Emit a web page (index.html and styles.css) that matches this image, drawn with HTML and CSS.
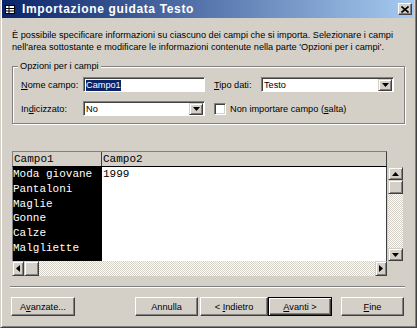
FILE: index.html
```html
<html>
<head>
<meta charset="UTF-8">
<link rel="stylesheet" href="styles.css">
</head>
<body>
<div class="window">
  <div class="titlebar">
    <svg class="app-icon" width="10" height="9" viewBox="0 0 10 9">
      <rect x="0.5" y="0.5" width="9" height="8" fill="#fff" stroke="#000"/>
      <path d="M1 3.5h8M1 6h8M4 1v7" stroke="#000" fill="none"/>
    </svg>
    <span class="title">Importazione guidata Testo</span>
    <span class="close">
      <svg width="8" height="7" viewBox="0 0 8 7"><path d="M0.5 0.5l7 6M7.5 0.5l-7 6" stroke="#000" stroke-width="1.6"/></svg>
    </span>
  </div>

  <div class="dialog">
    <p class="intro">È possibile specificare informazioni su ciascuno dei campi che si importa. Selezionare i campi<br>nell'area sottostante e modificare le informazioni contenute nella parte 'Opzioni per i campi'.</p>

    <fieldset class="group">
      <legend>Opzioni per i campi</legend>
      <div class="fields">
        <label class="lbl"><u>N</u>ome campo:</label>
        <div class="field"><span class="sel">Campo1</span></div>
        <span></span>
        <label class="lbl"><u>T</u>ipo dati:</label>
        <div class="field combo"><span class="val">Testo</span><span class="drop"><svg width="7" height="4" viewBox="0 0 7 4"><path d="M0 0h7L3.5 4z"/></svg></span></div>

        <label class="lbl">In<u>d</u>icizzato:</label>
        <div class="field combo"><span class="val">No</span><span class="drop"><svg width="7" height="4" viewBox="0 0 7 4"><path d="M0 0h7L3.5 4z"/></svg></span></div>
        <span></span>
        <div class="check-row"><span class="checkbox"></span><span>Non importare campo (<u>s</u>alta)</span></div>
      </div>
    </fieldset>

    <div class="sheet">
      <div class="sheet-head">
        <span class="hcol c1">Campo1</span>
        <span class="hcol c2">Campo2</span>
      </div>
      <div></div>
      <div class="sheet-body">
        <div class="dcol c1">
          <div>Moda giovane</div>
          <div>Pantaloni</div>
          <div>Maglie</div>
          <div>Gonne</div>
          <div>Calze</div>
          <div>Malgliette</div>
        </div>
        <div class="dcol c2">
          <div>1999</div>
        </div>
      </div>
      <div class="vscroll">
        <span class="sbtn vbtn"><svg width="7" height="4" viewBox="0 0 7 4"><path d="M0 4h7L3.5 0z"/></svg></span>
        <span class="thumb vthumb"></span>
        <span class="track"></span>
        <span class="sbtn vbtn"><svg width="7" height="4" viewBox="0 0 7 4"><path d="M0 0h7L3.5 4z"/></svg></span>
      </div>
      <div class="hscroll">
        <span class="sbtn hbtn"><svg width="4" height="7" viewBox="0 0 4 7"><path d="M4 0v7L0 3.5z"/></svg></span>
        <span class="thumb hthumb"></span>
        <span class="track"></span>
        <span class="sbtn hbtn"><svg width="4" height="7" viewBox="0 0 4 7"><path d="M0 0v7L4 3.5z"/></svg></span>
      </div>
    </div>

    <div class="separator"></div>

    <div class="buttons">
      <span class="btn b-adv"><span>A<u>v</u>anzate...</span></span>
      <span class="btn b-cancel"><span>Annulla</span></span>
      <span class="btn b-back"><span>&lt; <u>I</u>ndietro</span></span>
      <span class="btn b-next default"><span><u>A</u>vanti &gt;</span></span>
      <span class="btn b-end"><span><u>F</u>ine</span></span>
    </div>
  </div>
</div>
</body>
</html>
```

FILE: styles.css
```css
body {
  margin: 0;
  width: 417px;
  height: 328px;
  overflow: hidden;
  font-family: "Liberation Sans", Arial, sans-serif;
  font-size: 9.2px;
  color: #000;
}

/* window frame */
.window {
  box-sizing: border-box;
  width: 417px;
  height: 328px;
  background: #d4d0c8;
  border: 1px solid;
  border-top: 0;
  border-color: #d4d0c8 #404040 #404040 #d4d0c8;
  box-shadow: inset 1px 0 #fff, inset -1px -1px #808080;
  padding: 0 2px 2px 1px;
}

.titlebar {
  height: 18px;
  display: flex;
  align-items: center;
  background: linear-gradient(to right, #0a246a, #a6caf0);
  color: #fff;
}
.app-icon {
  margin-left: 3px;
  margin-right: 7px;
}
.title {
  font-weight: bold;
  font-size: 12px;
  letter-spacing: 0.65px;
  flex: 1;
}
.close {
  width: 14px;
  height: 12px;
  margin-right: 2px;
  display: flex;
  align-items: center;
  justify-content: center;
  background: #d4d0c8;
  border: 1px solid;
  border-color: #fff #404040 #404040 #fff;
  box-shadow: inset -1px -1px #808080;
  box-sizing: border-box;
}

/* dialog content */
.dialog {
  padding: 0 9px 0 10px;
}
.intro {
  margin: 11px 0 7px;
  line-height: 12px;
  white-space: nowrap;
}

.group {
  margin: 0;
  padding: 0 8px 7px;
  min-width: 0;
  border: 1px solid #808080;
  box-shadow: inset 1px 1px #fff, 1px 1px #fff;
}
.group legend {
  padding: 0 2px;
  margin-left: -3px;
  line-height: 12px;
  background: #d4d0c8;
}

.fields {
  margin-top: 5px;
  display: grid;
  grid-template-columns: 62px 122px 9px 47px 133px;
  grid-template-rows: 15px 15px;
  row-gap: 9px;
  align-items: center;
}
.check-row {
  grid-column: 4 / 6;
  display: flex;
  align-items: center;
}

.field {
  box-sizing: border-box;
  height: 15px;
  background: #fff;
  border: 1px solid;
  border-color: #808080 #fff #fff #808080;
  box-shadow: inset 1px 1px #404040;
  padding: 1px 1px 0 2px;
  display: flex;
  align-items: center;
}
.sel {
  background: #0a246a;
  color: #fff;
  line-height: 11px;
}
.val {
  flex: 1;
}
.drop {
  box-sizing: border-box;
  width: 14px;
  height: 12px;
  margin-top: -1px;
  display: flex;
  align-items: center;
  justify-content: center;
  background: #d4d0c8;
  border: 1px solid;
  border-color: #d4d0c8 #404040 #404040 #d4d0c8;
  box-shadow: inset 1px 1px #fff, inset -1px -1px #808080;
}
.checkbox {
  box-sizing: border-box;
  width: 12px;
  height: 12px;
  margin-right: 4px;
  background: #fff;
  border: 1px solid;
  border-color: #808080 #fff #fff #808080;
  box-shadow: inset 1px 1px #404040, inset -1px -1px #d4d0c8;
}

/* data preview */
.sheet {
  margin-top: 27px;
  display: grid;
  grid-template-columns: 375px 15px;
  grid-template-rows: 16px 94px 15px;
  column-gap: 1px;
  font-family: "Liberation Mono", "Courier New", monospace;
  font-size: 11px;
}
.sheet-head {
  display: flex;
  background: #d4d0c8;
  border-top: 1px solid #808080;
  border-left: 1px solid #808080;
  border-right: 1px solid #404040;
  border-bottom: 1px solid #000;
  line-height: 14px;
}
.hcol {
  padding-left: 1px;
}
.sheet-head .c1 {
  width: 87px;
  border-right: 1px solid #404040;
}
.sheet-body {
  display: flex;
  background: #fff;
  border-left: 1px solid #808080;
  border-right: 1px solid #404040;
  line-height: 14.8px;
}
.dcol.c1 {
  width: 89px;
  background: #000;
  color: #fff;
}
.dcol.c2 {
  padding-left: 1px;
}

.vscroll {
  display: flex;
  flex-direction: column;
}
.hscroll {
  display: flex;
}
.track {
  flex: 1;
  background: repeating-conic-gradient(#fff 0 25%, #d4d0c8 0 50%) 0 0 / 2px 2px;
}
.sbtn, .thumb {
  box-sizing: border-box;
  background: #d4d0c8;
  border: 1px solid;
  border-color: #d4d0c8 #404040 #404040 #d4d0c8;
  box-shadow: inset 1px 1px #fff, inset -1px -1px #808080;
  display: flex;
  align-items: center;
  justify-content: center;
}
.vbtn {
  height: 13px;
}
.vthumb {
  height: 14px;
}
.hbtn {
  width: 12px;
}
.hthumb {
  width: 15px;
}

.separator {
  margin: 10px 0 0 -2px;
  border-top: 1px solid #808080;
  border-bottom: 1px solid #fff;
}

/* buttons */
.buttons {
  margin: 9px 1px 0 -1px;
  display: flex;
}
.btn {
  box-sizing: border-box;
  height: 19px;
  display: flex;
  align-items: center;
  justify-content: center;
  background: #d4d0c8;
  border: 1px solid;
  border-color: #fff #404040 #404040 #fff;
  box-shadow: inset -1px -1px #808080;
}
.btn.default {
  border-color: #000;
  box-shadow: inset 1px 1px #fff, inset -1px -1px #404040, inset -2px -2px #808080;
}
.b-adv {
  width: 64px;
}
.b-cancel {
  width: 63px;
  margin-left: auto;
}
.b-back {
  width: 68px;
  margin-left: 2px;
}
.b-next {
  width: 64px;
}
.b-end {
  width: 63px;
  margin-left: 9px;
}
```
